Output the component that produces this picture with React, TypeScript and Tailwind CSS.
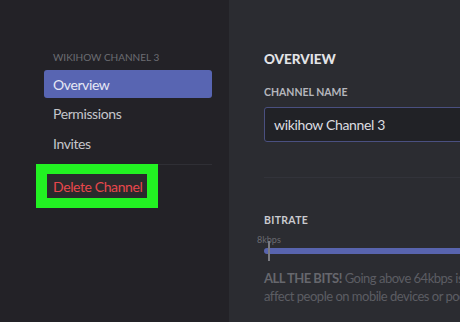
import React from "react";

export default function App() {
  const font = { fontFamily: "Lato, 'Open Sans', sans-serif" };
  return (
    <div className="flex h-[322px] w-[460px] overflow-hidden" style={font}>
      {/* Sidebar */}
      <div className="flex w-[229px] shrink-0 flex-col bg-[#232227] pl-[44px] pr-[17px] pt-[50px]">
        <div className="h-[14px] pl-[9px] text-[10px] leading-[14px] text-[#6c6d73]">
          WIKIHOW CHANNEL 3
        </div>
        <div className="mt-[6px] flex flex-col gap-[1.5px]">
          <div className="flex h-[28px] items-center rounded-[3px] bg-[#5865b2] pl-[9px] text-[14px] tracking-[-0.4px] text-[#e6e8f5]">
            Overview
          </div>
          <div className="flex h-[28px] items-center pl-[9px] text-[14px] tracking-[-0.4px] text-[#c5c6cb]">
            Permissions
          </div>
          <div className="flex h-[28px] items-center pl-[9px] text-[14px] tracking-[-0.4px] text-[#c5c6cb]">
            Invites
          </div>
        </div>
        <div className="mt-[7px] h-px w-full bg-[#2f2f35]" />
        <div className="relative -mt-px ml-[-8px] self-start border-x-[11px] border-y-[10px] border-[#22f222]">
          <div className="flex h-[24px] items-center bg-[#2a2a2d] pl-[6px] pr-[5px] text-[14px] tracking-[-0.4px] text-[#e8474c]">
            Delete Channel
          </div>
        </div>
      </div>

      {/* Main */}
      <div className="flex min-w-0 flex-1 flex-col overflow-hidden bg-[#2b2c31] pl-[35px] pt-[49px]">
        <div className="h-[20px] text-[13.5px] font-black leading-[20px] text-[#e3e4e7]">
          OVERVIEW
        </div>
        <div className="mt-[16px] h-[14px] text-[10.5px] font-bold leading-[14px] text-[#b5b6bc]">
          CHANNEL NAME
        </div>
        <div className="mt-[8px] flex h-[35px] w-[260px] shrink-0 items-center rounded-[3px] border border-[#4a5080] bg-[#212226] pl-[9px] text-[14px] tracking-[-0.35px] text-[#dcdde0]">
          wikihow Channel 3
        </div>
        <div className="mt-[35px] h-px w-[260px] shrink-0 bg-[#32333a]" />
        <div className="mt-[35px] h-[14px] text-[10.5px] font-bold leading-[14px] tracking-[0.3px] text-[#c9cacf]">
          BITRATE
        </div>
        <div className="relative mt-[14px] h-[20px] w-[260px] shrink-0">
          <div className="absolute left-[-7px] top-[-7px] text-[9px] leading-[12px] text-[#6a6b71]">8kbps</div>
          <div className="absolute left-0 top-[7px] h-[6px] w-[260px] rounded-l-full bg-[#5864ae]" />
          <div className="absolute left-[4px] top-0 h-[20px] w-[1.5px] bg-[#7a7b82]" />
        </div>
        <div className="mt-[8px] whitespace-nowrap text-[13px] leading-[18px] tracking-[-0.5px] text-[#5c5d63]">
          <div>
            <span className="font-bold text-[#66676d]">ALL THE BITS!</span> Going above 64kbps is great, but may adversely
          </div>
          <div>affect people on mobile devices or poor connections.</div>
        </div>
      </div>
    </div>
  );
}
